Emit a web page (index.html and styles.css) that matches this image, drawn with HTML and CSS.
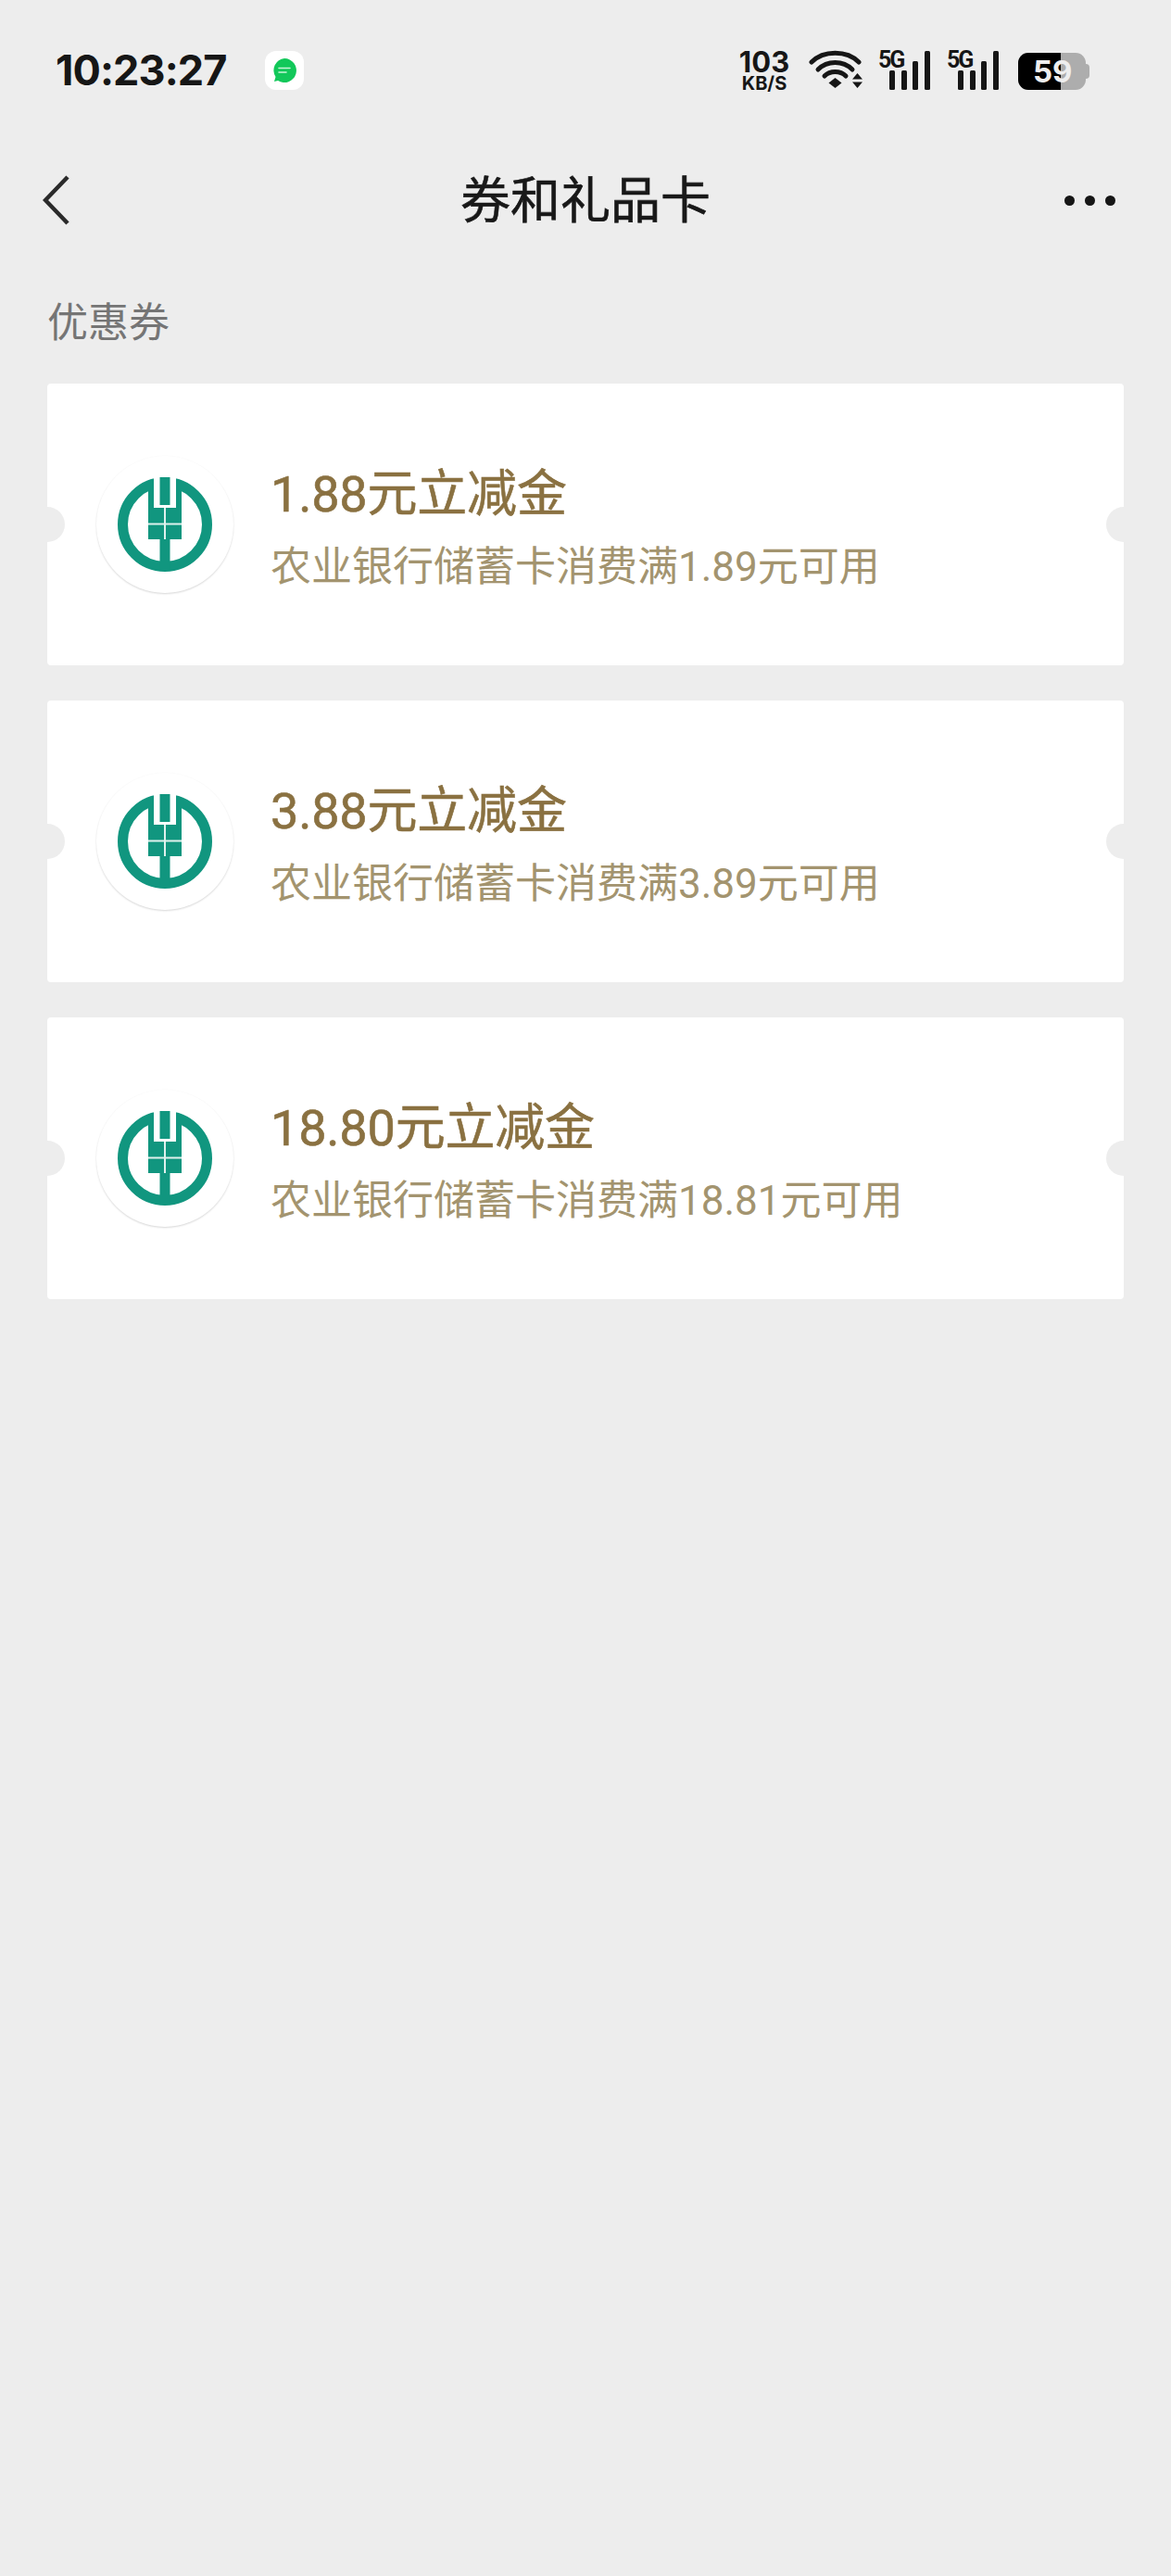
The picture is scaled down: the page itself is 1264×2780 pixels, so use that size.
FILE: index.html
```html
<!DOCTYPE html>
<html>
  <head>
    <meta charset="UTF-8" />
    <title>券和礼品卡</title>
    <link rel="stylesheet" href="styles.css">
  </head>
  <body>
    <svg width="0" height="0" class="defs">
      <symbol id="abc" viewBox="0 0 148 148">
        <circle cx="74" cy="74" r="45.500" fill="none" stroke="#11967f" stroke-width="11" />
        <rect x="62" y="18" width="24" height="38" fill="#fff" />
        <path d="M56 30h6v26h-6zM86 30h6v26h-6z" fill="#11967f" />
        <rect x="68.500" y="23" width="11" height="30" fill="#11967f" />
        <rect x="56" y="56" width="36" height="34" fill="#11967f" />
        <rect x="68.500" y="90" width="11" height="34" fill="#11967f" />
        <path d="M73 56h2v34h-2zM56 72.500h36v2h-36z" fill="#dff1ed" />
      </symbol>
      <symbol id="sig" viewBox="0 0 58 42">
        <rect x="12" y="21" width="6" height="21" rx="1.500" />
        <rect x="25" y="21" width="6" height="21" rx="1.500" />
        <rect x="37" y="11" width="6" height="31" rx="1.500" />
        <rect x="50" y="0" width="6" height="42" rx="1.500" />
      </symbol>
    </svg>

    <div class="status">
      <span class="time">10:23:27</span>
      <span class="notif">
        <svg width="30" height="30" viewBox="0 0 30 30">
          <path d="M15 2a13 13 0 1 1-7 24l-4 1 1.500-5A13 13 0 0 1 15 2z" fill="#12c85a" />
          <path d="M9 12.500h12M9 17h8" stroke="#c8f5d8" stroke-width="1.600" stroke-linecap="round" />
        </svg>
      </span>
      <div class="indicators">
        <div class="speed"><b>103</b><i>KB/S</i></div>
        <svg class="wifi" width="60" height="44" viewBox="0 0 60 44">
          <g fill="none" stroke="#161616" stroke-width="5" stroke-linecap="round">
            <path d="M3 13C16 0 41 0 54 13" />
            <path d="M10 21C20 11 37 11 47 21" />
            <path d="M17 28C23 22 34 22 40 28" />
          </g>
          <path d="M28.500 30l7 5.500-7 5.500-7-5.500z" fill="#161616" />
          <path d="M52.500 25l5.500 6.500H47zM52.500 41l5.500-6.500H47z" fill="#161616" />
        </svg>
        <div class="net"><span>5G</span><svg width="58" height="42"><use href="#sig" /></svg></div>
        <div class="net"><span>5G</span><svg width="58" height="42"><use href="#sig" /></svg></div>
        <div class="battery"><span class="level"></span><span class="pct">59</span></div>
      </div>
    </div>

    <div class="nav">
      <svg class="back" width="30" height="54" viewBox="0 0 30 54">
        <path d="M27 2L3 27l24 25" fill="none" stroke="#2a2a2a" stroke-width="4.500" />
      </svg>
      <h1>券和礼品卡</h1>
      <div class="more"><span></span><span></span><span></span></div>
    </div>

    <div class="label">优惠券</div>

    <div class="list">
      <div class="coupon">
        <div class="logo"><svg width="148" height="148"><use href="#abc" /></svg></div>
        <div class="info">
          <div class="name">1.88元立减金</div>
          <div class="desc">农业银行储蓄卡消费满1.89元可用</div>
        </div>
      </div>
      <div class="coupon">
        <div class="logo"><svg width="148" height="148"><use href="#abc" /></svg></div>
        <div class="info">
          <div class="name">3.88元立减金</div>
          <div class="desc">农业银行储蓄卡消费满3.89元可用</div>
        </div>
      </div>
      <div class="coupon">
        <div class="logo"><svg width="148" height="148"><use href="#abc" /></svg></div>
        <div class="info">
          <div class="name">18.80元立减金</div>
          <div class="desc">农业银行储蓄卡消费满18.81元可用</div>
        </div>
      </div>
    </div>
  </body>
</html>
```

FILE: styles.css
```css
html, body {
  margin: 0;
  height: 100%;
  background-color: #ededed;
  font-family: Roboto, "Noto Sans CJK SC", sans-serif;
  overflow: hidden;
}

.defs {
  position: absolute;
}

.status {
  height: 150px;
  box-sizing: border-box;
  padding: 54px 88px 0 60px;
  display: flex;
  align-items: flex-start;
}

.time {
  font-family: Inter, sans-serif;
  font-weight: 700;
  font-size: 45px;
  line-height: 44px;
  letter-spacing: -0.900px;
  color: #161616;
}

.notif {
  margin: 1px 0 0 41px;
  width: 42px;
  height: 42px;
  background-color: #fff;
  border-radius: 12px;
  display: flex;
  justify-content: center;
  align-items: center;
}

.indicators {
  margin-left: auto;
  display: flex;
  align-items: flex-start;
  color: #161616;
}

.speed {
  width: 56px;
  margin-right: 20px;
  display: flex;
  flex-direction: column;
  align-items: center;
  font-family: Inter, sans-serif;
}

.speed b {
  font-size: 31px;
  line-height: 26px;
  font-weight: 700;
}

.speed i {
  font-style: normal;
  font-weight: 700;
  font-size: 20px;
  line-height: 20px;
}

.wifi {
  margin-right: 15px;
}

.net {
  position: relative;
  width: 58px;
  height: 44px;
  margin-right: 16px;
}

.net + .battery {
  margin-left: 3px;
}

.net svg {
  display: block;
  margin-top: 1px;
  fill: #161616;
}

.net span {
  position: absolute;
  left: 0;
  top: -1px;
  font-size: 25px;
  line-height: 24px;
  font-weight: 700;
  letter-spacing: -2px;
}

.battery {
  position: relative;
  width: 73px;
  height: 40px;
  margin-top: 3px;
  margin-right: 4px;
  background-color: #adadad;
  border-radius: 11px;
}

.battery::after {
  content: ' ';
  position: absolute;
  right: -4px;
  top: 12px;
  width: 4px;
  height: 16px;
  border-radius: 0 4px 4px 0;
  background-color: #adadad;
}

.level {
  position: absolute;
  left: 0;
  top: 0;
  bottom: 0;
  width: 46px;
  border-radius: 11px 0 0 11px;
  background-color: #000;
}

.pct {
  position: absolute;
  left: 16px;
  top: 0;
  font-family: Inter, sans-serif;
  font-size: 33px;
  line-height: 40px;
  font-weight: 700;
  color: #eee;
}

.nav {
  position: relative;
  height: 134px;
  display: flex;
  justify-content: center;
  align-items: flex-start;
}

.nav h1 {
  margin: 0;
  padding-top: 31px;
  font-size: 54px;
  line-height: 74px;
  font-weight: 400;
  -webkit-text-stroke: 0.6px #181818;
  color: #181818;
}

.back {
  position: absolute;
  left: 46px;
  top: 39px;
}

.more {
  position: absolute;
  right: 60px;
  top: 61px;
  display: flex;
  gap: 11px;
}

.more span {
  width: 11px;
  height: 11px;
  border-radius: 50%;
  background-color: #161616;
}

.label {
  padding-left: 51px;
  height: 130px;
  box-sizing: border-box;
  padding-top: 35px;
  font-size: 44px;
  line-height: 60px;
  color: #757575;
}

.list {
  display: flex;
  flex-direction: column;
  gap: 38px;
  padding: 0 51px;
}

.coupon {
  position: relative;
  height: 304px;
  box-sizing: border-box;
  padding-left: 53px;
  background-color: #fff;
  border-radius: 4px;
  display: flex;
  align-items: center;
  overflow: hidden;
}

.coupon::before, .coupon::after {
  content: ' ';
  position: absolute;
  top: 50%;
  width: 38px;
  height: 38px;
  margin-top: -19px;
  border-radius: 50%;
  background-color: #ededed;
}

.coupon::before {
  left: -19px;
}

.coupon::after {
  right: -19px;
}

.logo {
  width: 148px;
  height: 148px;
  border-radius: 50%;
  background-color: #fff;
  box-shadow: 0 1px 2px rgba(0, 0, 0, 0.16);
  flex-shrink: 0;
}

.logo svg {
  display: block;
}

.info {
  margin-left: 40px;
  padding-top: 9px;
}

.name {
  font-size: 54px;
  line-height: 70px;
  letter-spacing: -0.200px;
  -webkit-text-stroke: 0.6px #8a7141;
  color: #8a7141;
}

.desc {
  margin-top: 13px;
  font-size: 44px;
  line-height: 60px;
  color: #a3946f;
}
```
